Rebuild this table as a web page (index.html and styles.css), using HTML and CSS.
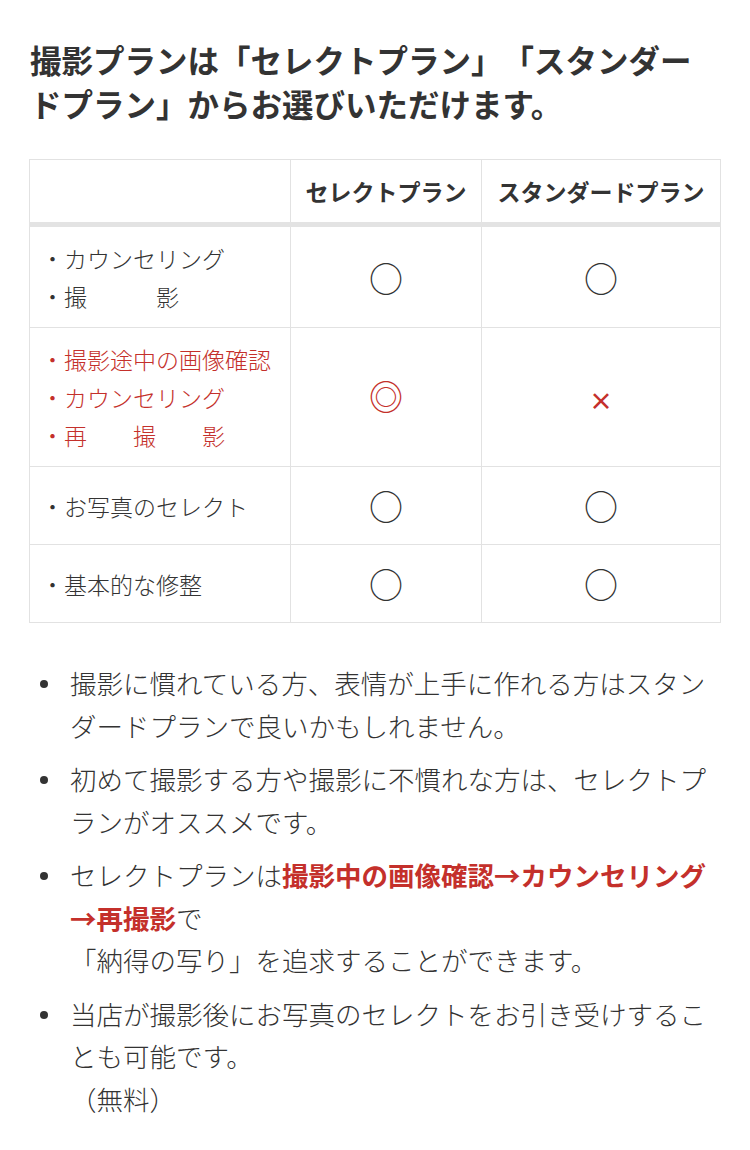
FILE: index.html
```html
<!DOCTYPE html>
<html lang="ja">
<head>
<meta charset="utf-8">
<link rel="stylesheet" href="styles.css">
</head>
<body>
<main class="page">
  <h2 class="title">撮影プランは「セレクトプラン」「スタンダードプラン」からお選びいただけます。</h2>
  <table class="plan">
    <colgroup>
      <col class="c1"><col class="c2"><col class="c3">
    </colgroup>
    <thead>
      <tr><th></th><th>セレクトプラン</th><th>スタンダードプラン</th></tr>
    </thead>
    <tbody>
      <tr>
        <td class="item">・カウンセリング<br>・撮　　　影</td>
        <td class="mark">○</td>
        <td class="mark">○</td>
      </tr>
      <tr class="red">
        <td class="item">・撮影途中の画像確認<br>・カウンセリング<br>・再　　撮　　影</td>
        <td class="mark dbl">◎</td>
        <td class="mark cross">×</td>
      </tr>
      <tr>
        <td class="item">・お写真のセレクト</td>
        <td class="mark">○</td>
        <td class="mark">○</td>
      </tr>
      <tr>
        <td class="item">・基本的な修整</td>
        <td class="mark">○</td>
        <td class="mark">○</td>
      </tr>
    </tbody>
  </table>
  <ul class="notes">
    <li>撮影に慣れている方、表情が上手に作れる方はスタンダードプランで良いかもしれません。</li>
    <li>初めて撮影する方や撮影に不慣れな方は、セレクトプランがオススメです。</li>
    <li><span>セレクトプランは<strong class="em">撮影中の画像確認→カウンセリング</strong><strong class="em">→再撮影</strong>で<br>「納得の写り」を追求することができます。</span></li>
    <li><span>当店が撮影後にお写真のセレクトをお引き受けすることも可能です。<br>（無料）</span></li>
  </ul>
</main>
</body>
</html>
```
FILE: styles.css
```css
html, body {
  margin: 0;
  padding: 0;
  background: #fff;
}
body {
  font-family: "Noto Sans CJK JP", "Noto Sans", sans-serif;
  color: #333;
  text-spacing-trim: space-all;
}
.page {
  padding: 38px 30px 20px 30px;
}
.title {
  margin: 0 0 34px 0;
  font-size: 31.5px;
  line-height: 43.5px;
  font-weight: 700;
  color: #333;
}
.plan {
  width: 691px;
  margin-left: -1px;
  border-collapse: collapse;
  table-layout: fixed;
  font-size: 23px;
  line-height: 38px;
}
.c1 { width: 261px; }
.c2 { width: 191px; }
.c3 { width: 239px; }
.plan th, .plan td {
  border: 1px solid #e2e2e2;
  padding: 12px 0;
  vertical-align: middle;
}
.plan th {
  font-weight: 700;
  text-align: center;
  border-bottom: 5px solid #e3e3e3;
  white-space: nowrap;
}
.plan td.item {
  padding-left: 11px;
  white-space: nowrap;
  font-weight: 300;
}
.plan td.mark {
  text-align: center;
  font-size: 34px;
  line-height: 53px;
}
.red td {
  color: #c4302b;
}
.plan td.cross {
  font-size: 24px;
  font-weight: 700;
  padding-top: 16px;
}
.plan td.dbl {
  padding-bottom: 16px;
}
.notes {
  list-style: none;
  margin: 39px 0 0 0;
  padding: 0;
  font-size: 26.5px;
  line-height: 42.5px;
  font-weight: 300;
}
.notes li {
  display: grid;
  grid-template-columns: 40px 1fr;
  margin-bottom: 11px;
}
.notes li::before {
  content: "";
  width: 8px;
  height: 8px;
  border-radius: 50%;
  background: #333;
  margin: 18px 0 0 10px;
}
.em {
  color: #c4302b;
  font-weight: 700;
}
```
